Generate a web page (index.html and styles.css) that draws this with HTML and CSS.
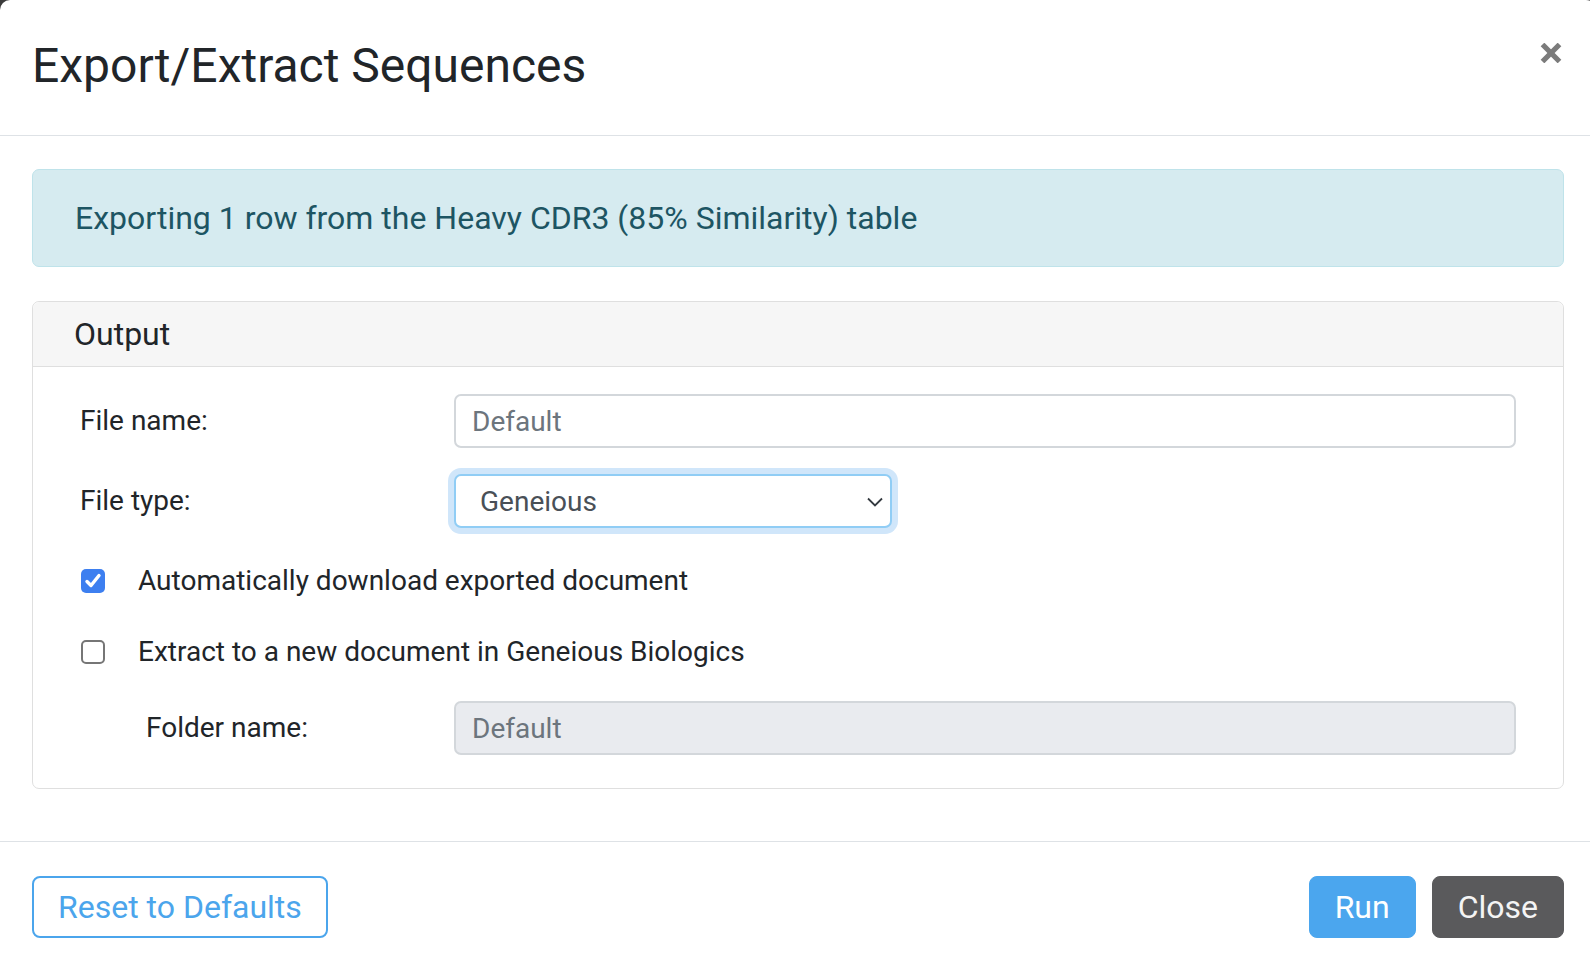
FILE: index.html
```html
<!DOCTYPE html>
<html lang="en">
<head>
<meta charset="utf-8">
<title>Export/Extract Sequences</title>
<link rel="stylesheet" href="styles.css">
</head>
<body>
<div class="modal">
  <div class="modal-header">
    <h5 class="modal-title">Export/Extract Sequences</h5>
    <button class="close" type="button" aria-label="Close">
      <svg width="22" height="20" viewBox="0 0 22 20"><path d="M2.5 1.5 L19.5 18.5 M19.5 1.5 L2.5 18.5" stroke="#7b7b7b" stroke-width="5.2" fill="none"/></svg>
    </button>
  </div>
  <div class="modal-body">
    <div class="alert">Exporting 1 row from the Heavy CDR3 (85% Similarity) table</div>
    <div class="card">
      <div class="card-header">Output</div>
      <div class="card-body">
        <div class="form-row">
          <label class="form-label">File name:</label>
          <input class="form-control" type="text" placeholder="Default">
        </div>
        <div class="form-row row-select">
          <label class="form-label">File type:</label>
          <div class="select">
            <span class="select-value">Geneious</span>
            <svg class="chevron" width="16" height="10" viewBox="0 0 16 10"><path d="M1 1.5 L8 8.5 L15 1.5" stroke="#343a40" stroke-width="1.8" fill="none"/></svg>
          </div>
        </div>
        <div class="check-row check-first">
          <span class="checkbox checked">
            <svg width="24" height="24" viewBox="0 0 24 24"><path d="M6 12.5 L10 16.5 L18 6.5" stroke="#fff" stroke-width="3.4" fill="none" stroke-linecap="round" stroke-linejoin="round"/></svg>
          </span>
          <span class="check-label">Automatically download exported document</span>
        </div>
        <div class="check-row check-second">
          <span class="checkbox"></span>
          <span class="check-label">Extract to a new document in Geneious Biologics</span>
        </div>
        <div class="form-row row-folder">
          <label class="form-label indent">Folder name:</label>
          <input class="form-control disabled" type="text" placeholder="Default" disabled>
        </div>
      </div>
    </div>
  </div>
  <div class="modal-footer">
    <button class="btn btn-outline" type="button">Reset to Defaults</button>
    <div class="footer-right">
      <button class="btn btn-primary" type="button">Run</button>
      <button class="btn btn-secondary" type="button">Close</button>
    </div>
  </div>
</div>
</body>
</html>
```
FILE: styles.css
```css
html, body {
  margin: 0;
  padding: 0;
  background: #3b3b3b;
  overflow: hidden;
  width: 1590px;
  height: 962px;
}
* { box-sizing: border-box; }

.modal {
  width: 1596px;
  height: 980px;
  background: #fff;
  border-radius: 10px;
  font-family: Roboto, "Liberation Sans", sans-serif;
  color: #212529;
}

.modal-header {
  display: flex;
  justify-content: space-between;
  align-items: flex-start;
  padding: 30px 34px 32px 32px;
  border-bottom: 1px solid #dee2e6;
  height: 136px;
}
.modal-title {
  margin: 0;
  font-size: 48px;
  font-weight: 400;
  line-height: 72px;
  color: #212529;
}
.close {
  margin-top: 13px;
  padding: 0;
  border: 0;
  background: transparent;
  line-height: 0;
}

.modal-body {
  padding: 33px 32px 52px 32px;
}

.alert {
  background: #d6ebf0;
  border: 1px solid #bfe3ea;
  color: #1d5563;
  border-radius: 7px;
  padding: 24px 38px 24px 42px;
  font-size: 32px;
  line-height: 48px;
  margin-bottom: 34px;
}

.card {
  border: 1px solid #dfdfdf;
  border-radius: 7px;
}
.card-header {
  background: #f6f6f6;
  border-bottom: 1px solid #dfdfdf;
  border-radius: 7px 7px 0 0;
  padding: 8px 40px 8px 41px;
  font-size: 32px;
  line-height: 48px;
}
.card-body {
  padding: 27px 47px 33px 47px;
}

.form-row {
  display: flex;
  align-items: center;
  height: 54px;
}
.row-select { margin-top: 26px; }
.row-folder { margin-top: 28px; }

.form-label {
  width: 374px;
  flex: none;
  font-size: 28px;
  line-height: 42px;
  color: #212529;
}
.form-label.indent {
  padding-left: 66px;
}

.form-control {
  flex: 1;
  height: 54px;
  border: 2px solid #d3d7db;
  border-radius: 7px;
  padding: 0 16px;
  font-family: Roboto, "Liberation Sans", sans-serif;
  font-size: 28px;
  color: #495057;
  background: #fff;
  outline: none;
}
.form-control::placeholder { color: #6c757d; }
.form-control.disabled {
  background: #e9ebef;
}

.select {
  width: 438px;
  height: 54px;
  border: 2px solid #90cdf5;
  border-radius: 7px;
  box-shadow: 0 0 0 6px #d0e6fa;
  display: flex;
  align-items: center;
  justify-content: space-between;
  padding: 2px 7px 0 24px;
  font-size: 28px;
  color: #495057;
  background: #fff;
}
.select-value { line-height: 42px; }

.check-row {
  display: flex;
  align-items: center;
  height: 42px;
  padding-left: 1px;
}
.check-first { margin-top: 32px; }
.check-second { margin-top: 29px; }
.checkbox {
  width: 24px;
  height: 24px;
  flex: none;
  border: 2px solid #767676;
  border-radius: 5px;
  background: #fff;
  margin-right: 33px;
  line-height: 0;
}
.checkbox.checked {
  background: #3d7ff0;
  border: 0;
}
.check-label {
  font-size: 28px;
  line-height: 42px;
}

.modal-footer {
  border-top: 1px solid #dee2e6;
  padding: 34px 32px 25px 32px;
  display: flex;
  justify-content: space-between;
  align-items: center;
}
.footer-right {
  display: flex;
  gap: 16px;
}
.btn {
  font-family: Roboto, "Liberation Sans", sans-serif;
  font-size: 32px;
  line-height: 48px;
  padding: 6px 24px;
  border-radius: 8px;
  border: 1px solid transparent;
  height: 62px;
}
.btn-outline {
  background: #fff;
  color: #4ba5ec;
  border: 2px solid #4ba5ec;
  padding: 5px 24px;
}
.btn-primary {
  background: #4ba6ee;
  color: #fff;
  border-color: #4ba6ee;
  padding: 6px 25px;
}
.btn-secondary {
  background: #5a5a5c;
  color: #f4f4f4;
  border-color: #5a5a5c;
  padding: 6px 25px;
}
```
